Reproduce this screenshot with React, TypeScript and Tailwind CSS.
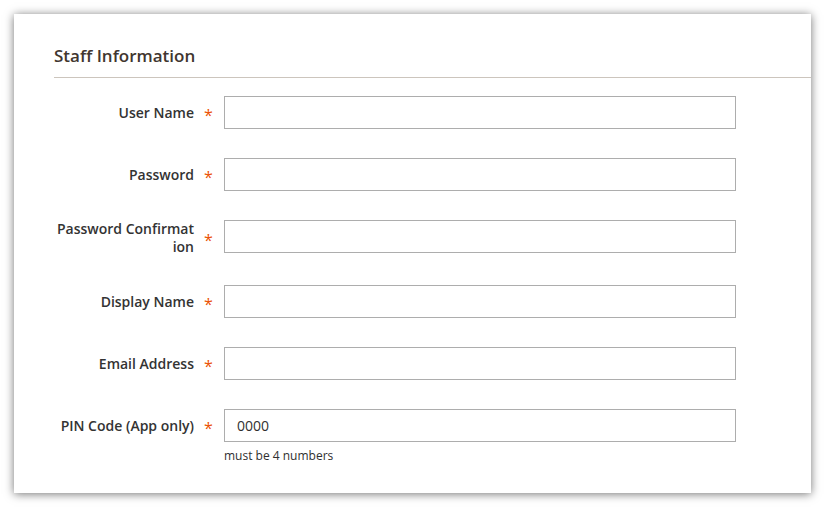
import React from 'react';

type Field = {
    id: string;
    label: string;
    value?: string;
    note?: string;
};

const fields: Field[] = [
    { id: 'username', label: 'User Name' },
    { id: 'password', label: 'Password' },
    { id: 'password_confirmation', label: 'Password Confirmation' },
    { id: 'display_name', label: 'Display Name' },
    { id: 'email', label: 'Email Address' },
    { id: 'pin', label: 'PIN Code (App only)', value: '0000', note: 'must be 4 numbers' },
];

function FormRow({ field }: { field: Field }) {
    return (
        <div className="flex flex-col">
            <div className="flex min-h-[33px] items-center">
                <label
                    htmlFor={field.id}
                    className="w-[140px] break-all text-right text-[14px] font-semibold leading-[18px] text-[#333333]"
                >
                    {field.label}
                </label>
                <span className="ml-[10px] mr-[11px] mt-[4px] w-[9px] text-[16px] leading-none text-[#eb5202]">*</span>
                <input
                    id={field.id}
                    type="text"
                    defaultValue={field.value}
                    className="h-[33px] w-[512px] self-start border border-[#adadad] bg-white px-[12px] text-[14px] text-[#303030] outline-none"
                />
            </div>
            {field.note && (
                <p className="ml-[170px] mt-[6px] text-[12px] leading-[16px] text-[#303030]">{field.note}</p>
            )}
        </div>
    );
}

export default function App() {
    return (
        <div className="h-[508px] w-[826px] bg-white p-[14px] pr-[15px] font-['Open_Sans',sans-serif]">
            <div className="h-[479px] w-[797px] bg-white pl-[40px] pt-[30px] shadow-[0_1px_9px_rgba(0,0,0,0.55)]">
                <h2 className="text-[17px] font-semibold leading-[24px] text-[#41362f]">Staff Information</h2>
                <div className="mt-[9px] border-b border-[#ccc5bd]" />
                <div className="mt-[18px] flex flex-col gap-[29px]">
                    {fields.map((f) => (
                        <FormRow key={f.id} field={f} />
                    ))}
                </div>
            </div>
        </div>
    );
}
